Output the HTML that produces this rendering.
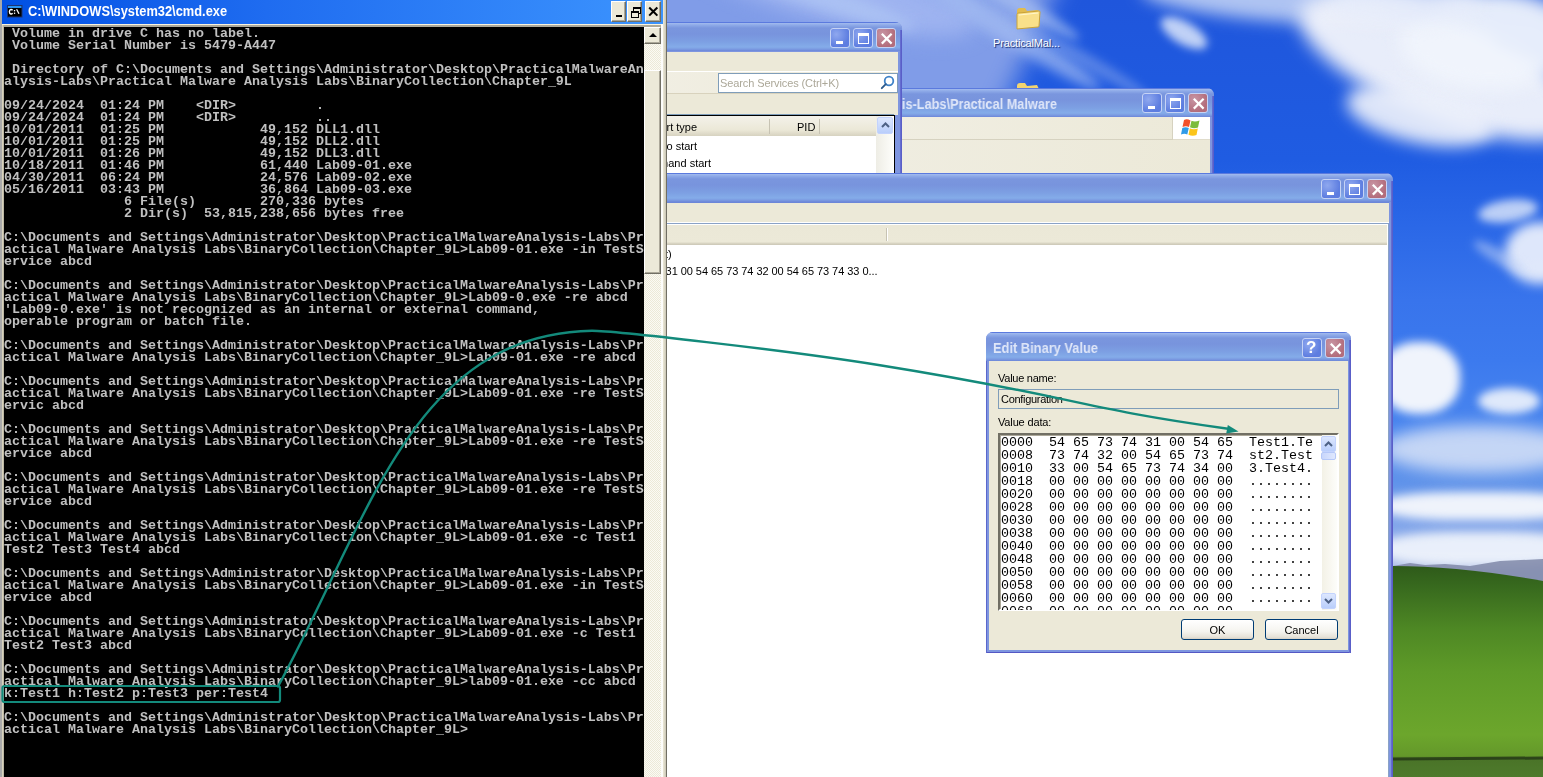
<!DOCTYPE html>
<html><head><meta charset="utf-8">
<style>
*{margin:0;padding:0;box-sizing:border-box}
html,body{width:1543px;height:777px;overflow:hidden}
body{position:relative;font-family:"Liberation Sans",sans-serif;background:#2b62e3}
.abs{position:absolute}
#desk{position:absolute;left:0;top:0;width:1543px;height:777px;overflow:hidden;
 background:linear-gradient(180deg,#2a5ad8 0%,#2f6ae6 30%,#3d7ef0 55%,#8aaee8 72%,#b8cdf0 73%)}
.win{position:absolute;background:#7e95df;border-radius:7px 7px 0 0;overflow:hidden;box-shadow:inset 0 -1px #5457c4}
.tb{position:absolute;left:0;right:0;top:0;height:29px;
 background:linear-gradient(180deg,#5b7ade 0px,#5b7ade 1px,#a3bbee 1px,#8eaae8 3px,#7a96de 6px,#7894dd 12px,#7da0e3 20px,#84ace9 25px,#7c9ce2 27px,#6c86d8 29px)}
.tbtn{position:absolute;top:6px;width:20px;height:20px;border-radius:3px;border:1px solid #c6d3f5;
 background:radial-gradient(circle at 30% 30%,#8fa8ef,#5d7de0 70%)}
.tbtn.cls{background:radial-gradient(circle at 30% 30%,#c896a4,#b36d7c 70%)}
.menu{position:absolute;background:#ece9d8}
.ttl{position:absolute;color:#dfe6f8;font-weight:bold;font-size:13px;white-space:pre}
.cbtn{position:absolute;top:1px;width:15px;height:21px;background:#ece9d8;border:1px solid;border-color:#fff #716f64 #716f64 #fff;box-shadow:inset -1px -1px #aca899}
.sbb{position:absolute;width:17px;height:17px;background:#ece9d8;border:1px solid;border-color:#fff #716f64 #716f64 #fff;box-shadow:inset -1px -1px #aca899}
#con{position:absolute;left:0;top:1px;font-family:"Liberation Mono",monospace;font-weight:bold;font-size:13.333px;line-height:12px;color:#c0c0c0;white-space:pre}
.txt{font-size:11px;color:#000;white-space:pre}
#hex{position:absolute;left:1px;top:1px;font-family:"Liberation Mono",monospace;font-size:13.333px;line-height:13px;color:#000;white-space:pre}
.ico-min{position:absolute;left:5px;top:12px;width:7px;height:3px;background:#fff}
.ico-max{position:absolute;left:4px;top:4px;width:11px;height:11px;border:1px solid #fff;border-top-width:3px}
.ico-x{position:absolute;left:3px;top:3px;width:13px;height:13px;background:linear-gradient(45deg,transparent 42%,#fff 42%,#fff 58%,transparent 58%),linear-gradient(-45deg,transparent 42%,#fff 42%,#fff 58%,transparent 58%)}
.xpbtn{position:absolute;width:73px;height:21px;border:1px solid #003c74;border-radius:3px;background:linear-gradient(180deg,#fff,#f5f4ef 60%,#e6e2d8 90%,#d6d0c5);font-size:11px;text-align:center;line-height:21px;color:#000}
.cl{position:absolute}
#con,#hex,.txt,.ttl,.xpbtn,#cmd,.win{will-change:transform}
.win::after{content:"";position:absolute;right:0;top:8px;bottom:0;width:2px;background:linear-gradient(90deg,#6a74d4,#5457c4)}
.win::before{content:"";position:absolute;left:0;top:8px;bottom:0;width:1px;background:#5b67cc}
</style></head><body>
<div id="desk">
  <div class="abs" style="left:0;top:0;width:1543px;height:600px;background:linear-gradient(180deg,#1f56dc 0px,#1f5ce2 160px,#2d6ae8 240px,#3874ec 300px,#3c7aee 360px,#4a86ee 430px,#5e92ea 480px,#86a8ea 530px,#aebfe6 566px)"></div>
  <!-- upper-left light streak region -->
  <div class="cl" style="left:520px;top:-160px;width:520px;height:260px;background:rgba(128,156,232,1);transform:rotate(24deg);filter:blur(12px)"></div>
  <div class="cl" style="left:680px;top:-40px;width:300px;height:60px;background:rgba(165,185,242,0.8);transform:rotate(14deg);filter:blur(10px);border-radius:50%"></div>
  <div class="cl" style="left:720px;top:-14px;width:200px;height:22px;background:rgba(175,198,244,0.75);transform:rotate(18deg);filter:blur(6px);border-radius:50%"></div>
  <div class="cl" style="left:860px;top:8px;width:260px;height:24px;background:rgba(165,190,242,0.7);transform:rotate(32deg);filter:blur(6px);border-radius:50%"></div>
  <div class="cl" style="left:930px;top:-10px;width:160px;height:18px;background:rgba(175,198,244,0.6);transform:rotate(30deg);filter:blur(5px);border-radius:50%"></div>
  <div class="cl" style="left:1000px;top:50px;width:160px;height:14px;background:rgba(140,170,238,0.5);transform:rotate(30deg);filter:blur(5px);border-radius:50%"></div>
  <!-- top-right cloud -->
  <div class="cl" style="left:1140px;top:-22px;width:290px;height:44px;background:rgba(210,222,248,0.8);filter:blur(8px);border-radius:50%;transform:rotate(4deg)"></div>
  <div class="cl" style="left:1158px;top:22px;width:52px;height:22px;background:rgba(220,230,250,0.85);filter:blur(4px);border-radius:50%;transform:rotate(30deg)"></div>
  <div class="cl" style="left:1290px;top:18px;width:300px;height:100px;background:rgba(238,242,251,0.97);filter:blur(9px);border-radius:50%;transform:rotate(22deg)"></div>
  <div class="cl" style="left:1345px;top:88px;width:150px;height:55px;background:rgba(236,240,251,0.92);filter:blur(8px);border-radius:50%;transform:rotate(12deg)"></div>
  <div class="cl" style="left:1495px;top:28px;width:50px;height:22px;background:rgba(60,110,225,0.6);filter:blur(6px);border-radius:50%"></div>
  <div class="cl" style="left:1400px;top:-10px;width:180px;height:100px;background:rgba(240,244,252,0.95);filter:blur(9px);border-radius:50%"></div>
  <div class="cl" style="left:1330px;top:-15px;width:150px;height:40px;background:rgba(230,236,250,0.85);filter:blur(8px);border-radius:50%"></div>
  <!-- mid right wisps -->
  <div class="cl" style="left:1478px;top:200px;width:60px;height:22px;background:rgba(225,234,250,0.8);filter:blur(4px);border-radius:50%;transform:rotate(-8deg)"></div>
  <div class="cl" style="left:1505px;top:222px;width:70px;height:62px;background:rgba(238,242,252,0.92);filter:blur(6px);border-radius:50%"></div>
  <div class="cl" style="left:1470px;top:250px;width:60px;height:14px;background:rgba(200,215,248,0.5);filter:blur(4px);border-radius:50%;transform:rotate(30deg)"></div>
  <!-- lower clouds -->
  <div class="cl" style="left:1380px;top:342px;width:80px;height:72px;background:rgba(246,248,252,0.97);filter:blur(5px);border-radius:45%"></div>
  <div class="cl" style="left:1478px;top:388px;width:62px;height:26px;background:rgba(240,244,252,0.9);filter:blur(4px);border-radius:50%"></div>
  <div class="cl" style="left:1380px;top:425px;width:200px;height:48px;background:rgba(225,233,248,0.8);filter:blur(8px);border-radius:50%"></div>
  <div class="cl" style="left:1380px;top:492px;width:200px;height:28px;background:rgba(246,248,252,0.95);filter:blur(5px);border-radius:40%"></div>
  <div class="cl" style="left:1380px;top:532px;width:200px;height:34px;background:rgba(240,244,252,0.92);filter:blur(5px);border-radius:40%"></div>
  <!-- hill -->
  <svg class="abs" style="left:0;top:0" width="1543" height="777">
    <defs>
      <linearGradient id="hillg" x1="0" y1="0" x2="0" y2="1">
        <stop offset="0" stop-color="#2e5a1a"/><stop offset="0.1" stop-color="#386a1e"/><stop offset="0.3" stop-color="#4e8824"/><stop offset="0.5" stop-color="#5e9a28"/><stop offset="0.8" stop-color="#6ca62c"/><stop offset="0.9" stop-color="#64982a"/><stop offset="0.92" stop-color="#4a7428"/><stop offset="1" stop-color="#4e7a2c"/>
      </linearGradient>
    </defs>
    <path d="M1393 566 L1410 563 L1425 565 L1445 564 L1470 566 L1500 561 L1543 559 L1543 585 L1393 585Z" fill="#8088a8" opacity="0.85"/>
    <path d="M1393 566 Q1460 566 1543 581 L1543 777 L1393 777Z" fill="url(#hillg)"/>
    <path d="M1393 759 L1543 758" stroke="#1e2e14" stroke-width="3" opacity="0.75"/>
  </svg>
  <!-- icons -->
  <svg class="abs" style="left:1014px;top:4px" width="28" height="28" viewBox="0 0 28 28">
    <path d="M3 7 Q3 4 6 4 L11 4 L13 7 L23 6 Q25 6 25 8 L25 10 L3 11Z" fill="#e2bc4e"/>
    <path d="M3 25 L3 10 Q3 9 5 9 L25 7 Q26 7 26 8 L25 22 Q25 23 24 23Z" fill="#f9e08a" stroke="#c9a23a" stroke-width="1"/>
    <path d="M5 11 L24 9" stroke="#fff6cc" stroke-width="1.2"/>
  </svg>
  <div class="abs" style="left:993px;top:37px;font-size:11px;color:#fff;text-shadow:1px 1px 1px #0a246a;white-space:pre;letter-spacing:-0.15px">PracticalMal...</div>
  <svg class="abs" style="left:1014px;top:79px" width="28" height="12" viewBox="0 0 28 12">
    <path d="M3 7 Q3 4 6 4 L11 4 L13 7 L23 6 L25 10 L3 11Z" fill="#f2d470"/>
  </svg>
</div>

<!-- explorer window -->
<div class="win" style="left:700px;top:88px;width:514px;height:100px">
  <div class="tb"></div>
  <div class="ttl" style="right:157px;top:8px;font-size:14px;transform:scaleX(0.91);transform-origin:100% 0">PracticalMalwareAnalysis-Labs\Practical Malware</div>
  <div class="tbtn" style="left:442px;top:5px"><div class="ico-min"></div></div>
  <div class="tbtn" style="left:465px;top:5px"><div class="ico-max"></div></div>
  <div class="tbtn cls" style="left:488px;top:5px"><svg class="abs" style="left:0;top:0" width="20" height="20"><path d="M4.8 4.8L14.6 14.6M14.6 4.8L4.8 14.6" stroke="#fff" stroke-width="2.2"/></svg></div>
  <div class="menu" style="left:4px;right:4px;top:29px;height:23px;background:linear-gradient(90deg,#f3f1e8,#ece9d8);border-bottom:1px solid #d6d2c0"></div>
  <div class="abs" style="left:472px;top:29px;width:1px;height:22px;background:#d6d2c0"></div>
  <div class="abs" style="left:473px;top:29px;width:37px;height:23px;background:#fff;border-bottom:1px solid #e0dccb"></div>
  <div class="abs" style="left:480px;top:30px;width:22px;height:20px">
    <svg width="22" height="20" viewBox="0 0 22 20"><path d="M4 2 Q7 0.5 10.5 2.5 L9 9 Q6 7.5 2.5 9Z" fill="#f2502a"/><path d="M11.5 2.8 Q15 4.5 19.5 2.5 L18 9.5 Q14 11 10 9.3Z" fill="#7cbc3a"/><path d="M2.3 10 Q5.5 8.5 8.8 10 L7.3 16.5 Q4.5 15 1 16.5Z" fill="#2f9be8"/><path d="M9.8 10.3 Q13.5 12 17.8 10.5 L16.5 17 Q12.5 18.5 8.5 16.8Z" fill="#fbc51a"/></svg>
  </div>
  <div class="menu" style="left:4px;right:4px;top:52px;height:48px;background:linear-gradient(90deg,#f1efe5,#ece9d8)"></div>
</div>

<!-- services window -->
<div class="win" style="left:500px;top:22px;width:402px;height:160px">
  <div class="tb"></div>
  <div class="tbtn" style="left:330px;top:6px"><div class="ico-min"></div></div>
  <div class="tbtn" style="left:353px;top:6px"><div class="ico-max"></div></div>
  <div class="tbtn cls" style="left:376px;top:6px"><svg class="abs" style="left:0;top:0" width="20" height="20"><path d="M4.8 4.8L14.6 14.6M14.6 4.8L4.8 14.6" stroke="#fff" stroke-width="2.2"/></svg></div>
  <div class="menu" style="left:4px;right:4px;top:30px;height:20px;border-bottom:1px solid #fff"></div>
  <div class="menu" style="left:4px;right:4px;top:50px;height:21px;background:linear-gradient(90deg,#f4f2ea,#ece9d8)"></div>
  <div class="abs" style="left:218px;top:51px;width:180px;height:20px;background:#fff;border:1px solid #7f9db9"></div>
  <div class="abs" style="left:220px;top:55px;font-size:11px;color:#aca899;white-space:pre;letter-spacing:-0.1px">Search Services (Ctrl+K)</div>
  <svg class="abs" style="left:375px;top:53px" width="20" height="16" viewBox="0 0 20 16"><circle cx="14" cy="6" r="4.3" fill="none" stroke="#3f82c8" stroke-width="1.8"/><path d="M10.8 9.2 L6.8 13.2" stroke="#2c5a8c" stroke-width="1.9" stroke-linecap="round"/></svg>
  <div class="menu" style="left:4px;right:4px;top:71px;height:22px;border-top:1px solid #d8d2bd"></div>
  <div class="abs" style="left:4px;top:92px;width:390px;height:1px;background:#7f9db9"></div>
  <div class="abs" style="left:4px;top:93px;width:391px;height:70px;background:#fff;border:1px solid #000;border-bottom:0"></div>
  <div class="abs" style="left:5px;top:94px;width:371px;height:20px;background:linear-gradient(180deg,#f4f2ea,#ebe8d7 70%,#d6d2c0)"></div>
  <div class="abs" style="left:269px;top:97px;width:1px;height:15px;background:#c7c3b3"></div>
  <div class="abs" style="left:319px;top:97px;width:1px;height:15px;background:#c7c3b3"></div>
  <div class="abs txt" style="left:150px;top:99px">Start type</div>
  <div class="abs txt" style="left:297px;top:99px">PID</div>
  <div class="abs txt" style="left:150px;top:118px">Auto start</div>
  <div class="abs txt" style="left:145px;top:135px">Demand start</div>
  <div class="abs" style="left:376px;top:94px;width:17px;height:70px;background:linear-gradient(90deg,#eeede5,#fdfdfa)"></div>
  <div class="abs" style="left:377px;top:95px;width:16px;height:17px;border-radius:2px;border:1px solid #c3d3fd;background:linear-gradient(180deg,#dde7fe,#b9cefb)">
    <svg class="abs" style="left:3px;top:4px" width="9" height="6" viewBox="0 0 9 6"><path d="M1 5 L4.5 1.5 L8 5" stroke="#4d6185" stroke-width="2" fill="none"/></svg>
  </div>
</div>

<!-- registry window -->
<div class="win" style="left:500px;top:173px;width:893px;height:620px">
  <div class="tb"></div>
  <div class="tbtn" style="left:821px;top:6px"><div class="ico-min"></div></div>
  <div class="tbtn" style="left:844px;top:6px"><div class="ico-max"></div></div>
  <div class="tbtn cls" style="left:867px;top:6px"><svg class="abs" style="left:0;top:0" width="20" height="20"><path d="M4.8 4.8L14.6 14.6M14.6 4.8L4.8 14.6" stroke="#fff" stroke-width="2.2"/></svg></div>
  <div class="menu" style="left:4px;right:4px;top:29px;height:20px;border-top:1px solid #6c86d8"></div>
  <div class="abs" style="left:4px;top:49px;right:4px;height:1px;background:#fff"></div>
  <div class="abs" style="left:4px;top:50px;right:4px;height:1px;background:#8aa2c6"></div>
  <div class="abs" style="left:4px;top:51px;right:4px;bottom:0;background:#fff"></div>
  <div class="abs" style="left:4px;top:52px;width:883px;height:20px;background:linear-gradient(180deg,#ebe8d7,#ece9d8 85%,#dcd8c6 90%,#cbc7b6)"></div>
  <div class="abs" style="left:386px;top:55px;width:1px;height:13px;background:#c7c3b3"></div>
  <div class="abs" style="left:387px;top:55px;width:1px;height:13px;background:#fff"></div>
  <div class="abs" style="left:888px;top:50px;width:1px;bottom:0;background:#8aa2c6"></div>
  <div class="abs txt" style="left:102px;top:75px">(value not set)</div>
  <div class="abs txt" style="left:105px;top:92px;letter-spacing:-0.05px">54 65 73 74 31 00 54 65 73 74 32 00 54 65 73 74 33 0...</div>
</div>

<!-- dialog -->
<div class="win" style="left:986px;top:332px;width:365px;height:321px">
  <div class="tb"></div>
  <div class="ttl" style="left:7px;top:8px;font-size:14px;transform:scaleX(0.918);transform-origin:0 0">Edit Binary Value</div>
  <div class="tbtn" style="left:316px;top:6px"><div class="abs" style="left:3px;top:-1px;font:bold 17px 'Liberation Sans',sans-serif;color:#fff">?</div></div>
  <div class="tbtn cls" style="left:339px;top:6px"><svg class="abs" style="left:0;top:0" width="20" height="20"><path d="M4.8 4.8L14.6 14.6M14.6 4.8L4.8 14.6" stroke="#fff" stroke-width="2.2"/></svg></div>
  <div class="menu" style="left:3px;right:3px;top:29px;bottom:3px"></div>
  <div class="abs txt" style="left:12px;top:40px;letter-spacing:-0.25px">Value name:</div>
  <div class="abs" style="left:12px;top:57px;width:341px;height:20px;border:1px solid #7f9db9;background:#ece9d8"></div>
  <div class="abs txt" style="left:15px;top:61px;letter-spacing:-0.3px">Configuration</div>
  <div class="abs txt" style="left:12px;top:84px;letter-spacing:-0.15px">Value data:</div>
  <div class="abs" style="left:12px;top:101px;width:341px;height:178px;background:#fff;border:2px solid;border-color:#716f64 #fff #fff #716f64;box-shadow:inset 1px 1px #aca899"></div>
  <div class="abs" style="left:14px;top:103px;width:322px;height:175px;overflow:hidden"><pre id="hex">0000  54 65 73 74 31 00 54 65  Test1.Te
0008  73 74 32 00 54 65 73 74  st2.Test
0010  33 00 54 65 73 74 34 00  3.Test4.
0018  00 00 00 00 00 00 00 00  ........
0020  00 00 00 00 00 00 00 00  ........
0028  00 00 00 00 00 00 00 00  ........
0030  00 00 00 00 00 00 00 00  ........
0038  00 00 00 00 00 00 00 00  ........
0040  00 00 00 00 00 00 00 00  ........
0048  00 00 00 00 00 00 00 00  ........
0050  00 00 00 00 00 00 00 00  ........
0058  00 00 00 00 00 00 00 00  ........
0060  00 00 00 00 00 00 00 00  ........
0068  00 00 00 00 00 00 00 00  ........</pre></div>
  <div class="abs" style="left:336px;top:103px;width:15px;height:175px;background:linear-gradient(90deg,#f3f1e6,#fdfdfa)"></div>
  <div class="abs" style="left:335px;top:104px;width:15px;height:16px;border-radius:2px;border:1px solid #c3d3fd;background:linear-gradient(180deg,#dde7fe,#b9cefb)">
    <svg class="abs" style="left:2px;top:4px" width="9" height="6" viewBox="0 0 9 6"><path d="M1 5 L4.5 1.5 L8 5" stroke="#4d6185" stroke-width="2" fill="none"/></svg>
  </div>
  <div class="abs" style="left:335px;top:120px;width:15px;height:8px;border-radius:2px;border:1px solid #b5c8f8;background:linear-gradient(90deg,#c8d6fb,#dfe8fe)"></div>
  <div class="abs" style="left:335px;top:261px;width:15px;height:16px;border-radius:2px;border:1px solid #c3d3fd;background:linear-gradient(180deg,#dde7fe,#b9cefb)">
    <svg class="abs" style="left:2px;top:4px" width="9" height="6" viewBox="0 0 9 6"><path d="M1 1 L4.5 4.5 L8 1" stroke="#4d6185" stroke-width="2" fill="none"/></svg>
  </div>
  <div class="xpbtn" style="left:195px;top:287px">OK</div>
  <div class="xpbtn" style="left:279px;top:287px">Cancel</div>
</div>

<!-- cmd -->
<div id="cmd" class="abs" style="left:0;top:0;width:667px;height:777px;background:#ece9d8">
  <div class="abs" style="left:0;top:0;width:2px;height:777px;background:#a9a9a9"></div>
  <div class="abs" style="left:2px;top:24px;width:2px;height:753px;background:linear-gradient(90deg,#e6e0c8,#aca899)"></div>
  <div class="abs" style="left:2px;top:0;width:661px;height:24px;background:linear-gradient(90deg,#0050e4 0%,#1f6cf0 40%,#3c94fe 100%)"></div>
  <div class="abs" style="left:2px;top:24px;width:661px;height:1px;background:#faf3dc"></div>
  <div class="abs" style="left:4px;top:25px;width:657px;height:2px;background:#aca899"></div>
  <!-- icon -->
  <svg class="abs" style="left:0;top:0" width="30" height="24"><rect x="7.5" y="5.5" width="14.5" height="11.5" fill="#000" stroke="#1f3570" stroke-width="1"/><rect x="8" y="6" width="13.5" height="2" fill="#2a94f2"/><path d="M12.6 10.2 Q11.8 9.3 10.8 9.5 Q9.4 9.8 9.4 11.8 Q9.4 13.8 10.8 14 Q11.8 14.2 12.6 13.3" stroke="#fff" stroke-width="1.4" fill="none"/><rect x="13.9" y="10" width="1.3" height="1.3" fill="#fff"/><rect x="13.9" y="12.6" width="1.3" height="1.3" fill="#fff"/><path d="M16.6 9.2 L19 13.8" stroke="#fff" stroke-width="1.3"/></svg>
  <div class="abs" style="left:28px;top:3px;font:bold 14px 'Liberation Sans',sans-serif;color:#fff;white-space:pre;transform:scaleX(0.917);transform-origin:0 0">C:\WINDOWS\system32\cmd.exe</div>
  <!-- buttons -->
  <div class="cbtn" style="left:611px"><div class="abs" style="left:4px;top:13px;width:6px;height:2px;background:#000"></div></div>
  <div class="cbtn" style="left:627px">
    <div class="abs" style="left:5px;top:5px;width:8px;height:7px;border:1px solid #000;border-top-width:2px"></div>
    <div class="abs" style="left:3px;top:9px;width:8px;height:7px;border:1px solid #000;border-top-width:2px;background:#ece9d8"></div>
  </div>
  <div class="cbtn" style="left:645px;width:16px"><div class="abs" style="left:1px;top:1px;font:bold 15px 'Liberation Sans',sans-serif;color:#000">&#x2715;</div></div>
  <!-- console -->
  <div class="abs" style="left:4px;top:27px;width:640px;height:750px;background:#000;overflow:hidden">
    <pre id="con"> Volume in drive C has no label.
 Volume Serial Number is 5479-A447

 Directory of C:\Documents and Settings\Administrator\Desktop\PracticalMalwareAn
alysis-Labs\Practical Malware Analysis Labs\BinaryCollection\Chapter_9L

09/24/2024  01:24 PM    &lt;DIR&gt;          .
09/24/2024  01:24 PM    &lt;DIR&gt;          ..
10/01/2011  01:25 PM            49,152 DLL1.dll
10/01/2011  01:25 PM            49,152 DLL2.dll
10/01/2011  01:26 PM            49,152 DLL3.dll
10/18/2011  01:46 PM            61,440 Lab09-01.exe
04/30/2011  06:24 PM            24,576 Lab09-02.exe
05/16/2011  03:43 PM            36,864 Lab09-03.exe
               6 File(s)        270,336 bytes
               2 Dir(s)  53,815,238,656 bytes free

C:\Documents and Settings\Administrator\Desktop\PracticalMalwareAnalysis-Labs\Pr
actical Malware Analysis Labs\BinaryCollection\Chapter_9L&gt;Lab09-01.exe -in TestS
ervice abcd

C:\Documents and Settings\Administrator\Desktop\PracticalMalwareAnalysis-Labs\Pr
actical Malware Analysis Labs\BinaryCollection\Chapter_9L&gt;Lab09-0.exe -re abcd
&#x27;Lab09-0.exe&#x27; is not recognized as an internal or external command,
operable program or batch file.

C:\Documents and Settings\Administrator\Desktop\PracticalMalwareAnalysis-Labs\Pr
actical Malware Analysis Labs\BinaryCollection\Chapter_9L&gt;Lab09-01.exe -re abcd

C:\Documents and Settings\Administrator\Desktop\PracticalMalwareAnalysis-Labs\Pr
actical Malware Analysis Labs\BinaryCollection\Chapter_9L&gt;Lab09-01.exe -re TestS
ervic abcd

C:\Documents and Settings\Administrator\Desktop\PracticalMalwareAnalysis-Labs\Pr
actical Malware Analysis Labs\BinaryCollection\Chapter_9L&gt;Lab09-01.exe -re TestS
ervice abcd

C:\Documents and Settings\Administrator\Desktop\PracticalMalwareAnalysis-Labs\Pr
actical Malware Analysis Labs\BinaryCollection\Chapter_9L&gt;Lab09-01.exe -re TestS
ervice abcd

C:\Documents and Settings\Administrator\Desktop\PracticalMalwareAnalysis-Labs\Pr
actical Malware Analysis Labs\BinaryCollection\Chapter_9L&gt;Lab09-01.exe -c Test1
Test2 Test3 Test4 abcd

C:\Documents and Settings\Administrator\Desktop\PracticalMalwareAnalysis-Labs\Pr
actical Malware Analysis Labs\BinaryCollection\Chapter_9L&gt;Lab09-01.exe -in TestS
ervice abcd

C:\Documents and Settings\Administrator\Desktop\PracticalMalwareAnalysis-Labs\Pr
actical Malware Analysis Labs\BinaryCollection\Chapter_9L&gt;Lab09-01.exe -c Test1
Test2 Test3 abcd

C:\Documents and Settings\Administrator\Desktop\PracticalMalwareAnalysis-Labs\Pr
actical Malware Analysis Labs\BinaryCollection\Chapter_9L&gt;lab09-01.exe -cc abcd
k:Test1 h:Test2 p:Test3 per:Test4

C:\Documents and Settings\Administrator\Desktop\PracticalMalwareAnalysis-Labs\Pr
actical Malware Analysis Labs\BinaryCollection\Chapter_9L&gt;</pre>
  </div>
  <!-- scrollbar -->
  <div class="abs" style="left:644px;top:27px;width:17px;height:750px;background-color:#f5f3ea;background-image:repeating-conic-gradient(#ece9d8 0 25%,#fbfaf4 0 50%);background-size:2px 2px"></div>
  <div class="sbb" style="left:644px;top:27px"><div class="abs" style="left:4px;top:5px;width:0;height:0;border-left:4px solid transparent;border-right:4px solid transparent;border-bottom:4px solid #000"></div></div>
  <div class="sbb" style="left:644px;top:70px;height:204px"></div>
  <!-- right frame -->
  <div class="abs" style="left:661px;top:24px;width:2px;height:753px;background:#fdfdfb"></div>
  <div class="abs" style="left:663px;top:0;width:3px;height:777px;background:linear-gradient(90deg,#ece9d8,#c9c5b4)"></div>
  <div class="abs" style="left:666px;top:0;width:1px;height:777px;background:#716f64"></div>
</div>
<!-- annotation -->
<svg class="abs" style="left:0;top:0;z-index:50" width="1543" height="777">
  <rect x="2.5" y="686" width="277.5" height="16" rx="2" ry="2" fill="none" stroke="#138a7b" stroke-width="2.2"/>
  <path d="M278.0 686.5 C369.0 519.7 412.0 334.4 592.0 330.8 C612.0 330.8 781.3 349.4 880.0 365.2 C1077.5 396.8 1069.5 406.5 1228.0 428.7" fill="none" stroke="#138a7b" stroke-width="2.4" stroke-linecap="round"/>
  <polygon points="1238.5,431.4 1227.8,424.9 1226.2,433.4" fill="#138a7b"/>
</svg>
</body></html>
